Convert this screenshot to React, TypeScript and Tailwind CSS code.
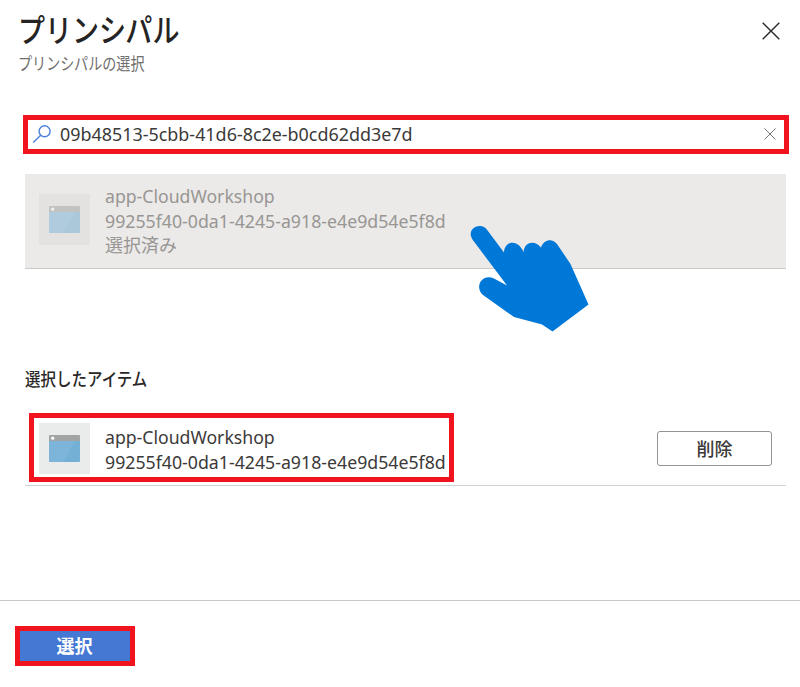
import React from "react";

const FONT = "font-['Noto_Sans','Noto_Sans_CJK_JP',sans-serif]";

function AppIcon({ muted = false }: { muted?: boolean }) {
  return (
    <div className={`flex h-[51px] w-[51px] shrink-0 items-center justify-center ${muted ? "bg-[#e3e2e1]" : "bg-[#e9eceb]"}`}>
      <svg width="31" height="27" viewBox="0 0 31 27" className={muted ? "opacity-50" : ""}>
        <path d="M1 0h29a1 1 0 0 1 1 1v5H0V1a1 1 0 0 1 1-1Z" fill="#a2a3a3" />
        <path d="M0 6h31v20a1 1 0 0 1-1 1H1a1 1 0 0 1-1-1Z" fill="#74b0d6" />
        <path d="M0 6h26L14 27H1a1 1 0 0 1-1-1Z" fill="#7db5da" />
        <circle cx="3.7" cy="3.2" r="1.6" fill="#fff" />
      </svg>
    </div>
  );
}

function Cross({ size, color, width }: { size: number; color: string; width: number }) {
  return (
    <svg width={size} height={size} viewBox="0 0 18 18" fill="none" stroke={color} strokeWidth={width}>
      <path d="M.7.7l16.6 16.6M17.3.7.7 17.3" />
    </svg>
  );
}

function Principal() {
  return (
    <>
      <div className="h-[25px] w-fit origin-left scale-x-[0.98]">app-CloudWorkshop</div>
      <div className="h-[24px] w-fit origin-left scale-x-[0.985]">99255f40-0da1-4245-a918-e4e9d54e5f8d</div>
    </>
  );
}

export default function App() {
  return (
    <main className={`relative flex h-[687px] w-[800px] flex-col overflow-hidden bg-white text-[18px] leading-[24px] whitespace-nowrap text-[#3b3a39] ${FONT}`}>
      <header className="flex h-[115px] shrink-0 justify-between pr-[20px] pl-[18px]">
        <div className="pt-[8px]">
          <h1 className="h-[44px] w-fit origin-left scale-x-[0.845] text-[32px] leading-[44px] font-medium text-[#252423]">プリンシパル</h1>
          <p className="w-fit origin-left scale-x-[0.83] text-[17px] text-[#706e6c]">プリンシパルの選択</p>
        </div>
        <button aria-label="閉じる" className="mt-[22px] h-[18px]"><Cross size={18} color="#292827" width={1.4} /></button>
      </header>

      <div className="ml-[23px] flex h-[39px] w-[766px] shrink-0 items-center border-[5px] border-[#f1131d] pr-[8px] pb-[2px] pl-[4px]">
        <svg width="20" height="20" viewBox="0 0 20 20" fill="none" stroke="#4a82d8" strokeWidth="1.4" className="shrink-0">
          <circle cx="12.6" cy="7.3" r="5.5" />
          <path d="M8.7 11.3 1.2 18.6" />
        </svg>
        <div className="ml-[8px] flex-1"><span className="inline-block origin-left scale-x-[0.995]">09b48513-5cbb-41d6-8c2e-b0cd62dd3e7d</span></div>
        <Cross size={12} color="#777675" width={1.5} />
      </div>

      <section className="mt-[20px] ml-[25px] flex h-[95px] w-[761px] shrink-0 items-center border-b border-[#cccbca] bg-[#ebeae8] pl-[14px] text-[#989694]">
        <div className="mb-[3px]"><AppIcon muted /></div>
        <div className="ml-[15px] h-[74px]">
          <Principal />
          <div className="w-fit origin-left">選択済み</div>
        </div>
      </section>

      <h2 className="mt-[98px] ml-[25px] h-[24px] w-fit shrink-0 origin-left scale-x-[0.86] text-[18px] font-medium text-[#292827]">選択したアイテム</h2>

      <section className="mt-[22px] ml-[25px] flex h-[73px] w-[761px] shrink-0 border-b border-[#d0d0d0]">
        <div className="ml-[4px] flex h-[69px] w-[425px] border-[5px] border-[#f1131d] pt-[5px] pl-[5px]">
          <AppIcon />
          <div className="mt-[2px] ml-[15px] h-[49px]"><Principal /></div>
        </div>
        <button className="mt-[18px] mr-[14px] ml-auto flex h-[35px] w-[115px] items-center justify-center rounded-[3px] border border-[#949392] text-[18px] font-medium">削除</button>
      </section>

      <footer className="mt-auto h-[87px] shrink-0 border-t border-[#c9c8c7] pt-[25px] pl-[15px]">
        <button className="flex h-[40px] w-[120px] items-center justify-center border-[5px] border-[#f1131d] bg-[#4478d2] pr-px pb-px text-[18px] font-bold text-white">選択</button>
      </footer>

      <svg className="absolute top-[225px] left-[469px]" width="121" height="108" viewBox="469 225 121 108" fill="#0078d7">
        <path d="M472.8 240C467.5 232.5 473 226 480 226c3 0 5 1.2 7 3.800L504 252.500c.5-12 14-14 19.500-.5 1-11 12-12 17.500-4.500 3-8.500 11.500-9.500 16-3.500L570.500 264 588.500 304.500 552.500 331.500 542 324.500 514 317 483 295c-9-8-1-22 11-16.500l13 7Z" />
      </svg>
    </main>
  );
}
